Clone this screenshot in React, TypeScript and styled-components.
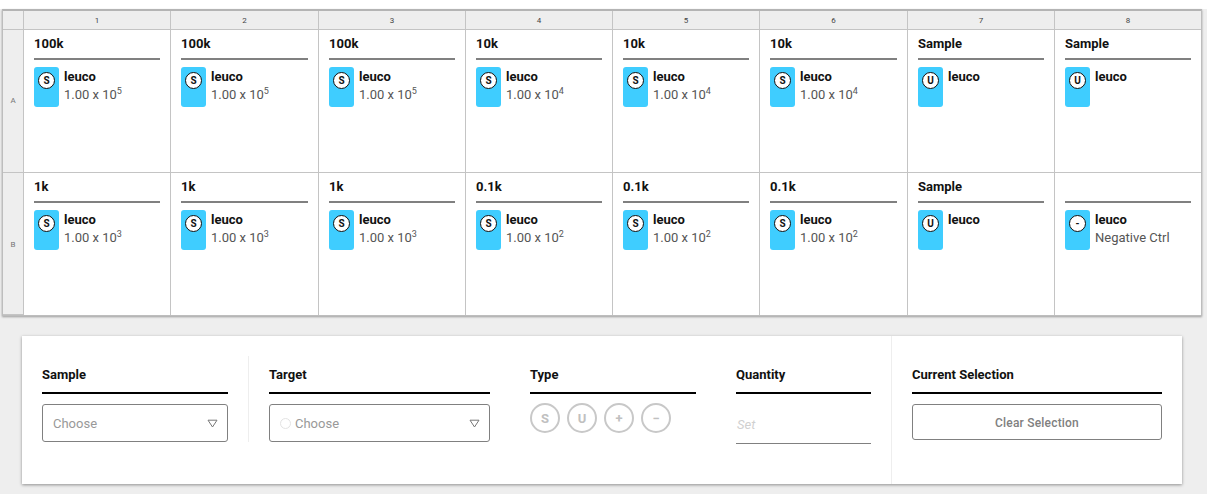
import React from "react";
import styled, { createGlobalStyle } from "styled-components";

const Global = createGlobalStyle`
  html, body { margin: 0; padding: 0; background: #eeeeee; }
  body { font-family: Roboto, "Liberation Sans", sans-serif; width: 1207px; height: 494px; overflow: hidden; }
`;
const TopStrip = styled.div`height: 9px; background: #fff;`;
const Plate = styled.div`
  margin-left: 2px; width: 1200px; height: 307px; background: #fff;
  border: 1px solid #bdbdbd; border-top: 2px solid #b4b4b4; box-sizing: border-box;
  box-shadow: 0 1px 2px rgba(0,0,0,.35);
  display: grid;
  grid-template-columns: 21px 147px 148px 147px 147px 147px 148px 147px 1fr;
  grid-template-rows: 19px 143px 1fr;
`;
const HeadCell = styled.div`
  background: #eeeeee; color: #444; font-size: 8px; display: flex; align-items: center; justify-content: center;
  border-right: 1px solid #c4c4c4; border-bottom: 1px solid #c4c4c4;
  &:nth-child(9) { border-right: 0; }
`;
const RowHead = styled(HeadCell)<{ $shift: number }>`
  font-size: 8px; color: #777; box-sizing: border-box;
  padding-bottom: ${(p) => (p.$shift < 0 ? -p.$shift : 0)}px;
  padding-top: ${(p) => (p.$shift > 0 ? p.$shift : 0)}px;
  &:nth-child(n) { border-right: 1px solid #c4c4c4; }
`;
const Well = styled.div<{ $last?: boolean; $bottom?: boolean }>`
  padding: 7px 10px 0 10px; box-sizing: border-box; background: #fff; min-width: 0;
  border-right: ${(p) => (p.$last ? "0" : "1px solid #c4c4c4")};
  border-bottom: ${(p) => (p.$bottom ? "0" : "1px solid #c4c4c4")};
`;
const WellTitle = styled.div`
  font-size: 13px; font-weight: 700; color: #111; height: 14px; line-height: 14px;
  padding-bottom: 7px; border-bottom: 2px solid #808080; margin-bottom: 7px; box-sizing: content-box;
`;
const Target = styled.div`display: flex; gap: 5px;`;
const Chip = styled.div`
  width: 25px; height: 40px; background: #3fcdff; border-radius: 3px; flex: none; padding: 5px 0 0 4px; box-sizing: border-box;
`;
const Badge = styled.div`
  width: 17px; height: 17px; box-sizing: border-box; border: 1px solid #111; border-radius: 50%; background: #fff;
  font-size: 10px; font-weight: 700; color: #111; display: flex; align-items: center; justify-content: center;
`;
const TargetText = styled.div`display: flex; flex-direction: column;`;
const TargetName = styled.div`font-size: 13px; font-weight: 700; color: #111; line-height: 14px; margin-top: 3px;`;
const TargetQty = styled.div`
  font-size: 13px; color: #555; line-height: 14px; margin-top: 4px; white-space: nowrap;
  sup { font-size: 9px; line-height: 0; vertical-align: 5px; }
`;
const Panel = styled.div`
  margin: 20px 0 0 22px; width: 1160px; height: 148px; background: #fff; box-shadow: 0 1px 3px rgba(0,0,0,.4);
  display: flex;
`;
const Fields = styled.div`
  flex: none; width: 870px; display: flex; padding: 20px 0 0 20px; box-sizing: border-box; border-right: 1px solid #eee;
`;
const Field = styled.div<{ $w: number; $gap: number }>`
  width: ${(p) => p.$w}px; margin-right: ${(p) => p.$gap}px; flex: none;
`;
const VRule = styled.div`width: 1px; height: 86px; background: #eeeeee; margin: 0 20px; flex: none;`;
const Label = styled.div`
  font-size: 13px; font-weight: 700; color: #111; line-height: 14px; height: 16px; padding-top: 12px;
  padding-bottom: 8px; border-bottom: 2px solid #000; margin-bottom: 10px; box-sizing: content-box;
`;
const Select = styled.div`
  height: 38px; box-sizing: border-box; border: 1px solid #808080; border-radius: 3px; display: flex; align-items: center;
  padding: 0 9px 0 10px; font-size: 13px; color: #999; gap: 5px;
`;
const Dot = styled.span`width: 9px; height: 9px; border: 1px solid #e3e3e3; border-radius: 50%; flex: none; margin-right: -1px;`;
const Caret = styled.svg`margin-left: auto; flex: none;`;
const TypeRow = styled.div`display: flex; gap: 7px; margin-top: -1px;`;
const TypeBtn = styled.div`
  width: 30px; height: 30px; box-sizing: border-box; border: 2px solid #c8c8c8; border-radius: 50%;
  color: #c0c0c0; font-size: 13px; font-weight: 700; display: flex; align-items: center; justify-content: center;
`;
const QtyInput = styled.div`
  font-size: 13px; font-style: italic; color: #d0d0d0; height: 40px; line-height: 41px; padding-left: 1px; box-sizing: border-box;
  border-bottom: 1px solid #808080;
`;
const Current = styled.div`flex: 1; padding: 20px 20px 0 20px; box-sizing: border-box;`;
const ClearBtn = styled.div`
  height: 36px; box-sizing: border-box; border: 1px solid #808080; border-radius: 3px; font-size: 12px; font-weight: 500; color: #808080;
  display: flex; align-items: center; justify-content: center; letter-spacing: .2px; padding-top: 1px;
`;

type W = { t: string; b: string; e?: number; txt?: string };
const rowA: W[] = [
  { t: "100k", b: "S", e: 5 }, { t: "100k", b: "S", e: 5 }, { t: "100k", b: "S", e: 5 },
  { t: "10k", b: "S", e: 4 }, { t: "10k", b: "S", e: 4 }, { t: "10k", b: "S", e: 4 },
  { t: "Sample", b: "U" }, { t: "Sample", b: "U" },
];
const rowB: W[] = [
  { t: "1k", b: "S", e: 3 }, { t: "1k", b: "S", e: 3 }, { t: "1k", b: "S", e: 3 },
  { t: "0.1k", b: "S", e: 2 }, { t: "0.1k", b: "S", e: 2 }, { t: "0.1k", b: "S", e: 2 },
  { t: "Sample", b: "U" }, { t: "", b: "-", txt: "Negative Ctrl" },
];

const Wells = ({ row, bottom }: { row: W[]; bottom?: boolean }) => (
  <>
    {row.map((w, i) => (
      <Well key={i} $last={i === 7} $bottom={bottom}>
        <WellTitle>{w.t}</WellTitle>
        <Target>
          <Chip><Badge>{w.b}</Badge></Chip>
          <TargetText>
            <TargetName>leuco</TargetName>
            {w.e !== undefined && <TargetQty>1.00 x 10<sup>{w.e}</sup></TargetQty>}
            {w.txt && <TargetQty>{w.txt}</TargetQty>}
          </TargetText>
        </Target>
      </Well>
    ))}
  </>
);

const Arrow = () => (
  <Caret width="11" height="9" viewBox="0 0 11 9">
    <path d="M1 1.2 H10 L5.5 8 Z" fill="none" stroke="#777" strokeWidth="1" />
  </Caret>
);

export default function App() {
  return (
    <>
      <Global />
      <TopStrip />
      <Plate>
        <HeadCell />
        {[1, 2, 3, 4, 5, 6, 7, 8].map((n) => <HeadCell key={n}>{n}</HeadCell>)}
        <RowHead $shift={-2}>A</RowHead>
        <Wells row={rowA} />
        <RowHead $shift={2}>B</RowHead>
        <Wells row={rowB} bottom />
      </Plate>
      <Panel>
        <Fields>
          <Field $w={186} $gap={0}>
            <Label>Sample</Label>
            <Select>Choose<Arrow /></Select>
          </Field>
          <VRule />
          <Field $w={221} $gap={40}>
            <Label>Target</Label>
            <Select><Dot />Choose<Arrow /></Select>
          </Field>
          <Field $w={166} $gap={40}>
            <Label>Type</Label>
            <TypeRow>
              <TypeBtn>S</TypeBtn><TypeBtn>U</TypeBtn><TypeBtn>+</TypeBtn><TypeBtn>−</TypeBtn>
            </TypeRow>
          </Field>
          <Field $w={135} $gap={0}>
            <Label>Quantity</Label>
            <QtyInput>Set</QtyInput>
          </Field>
        </Fields>
        <Current>
          <Label>Current Selection</Label>
          <ClearBtn>Clear Selection</ClearBtn>
        </Current>
      </Panel>
    </>
  );
}
